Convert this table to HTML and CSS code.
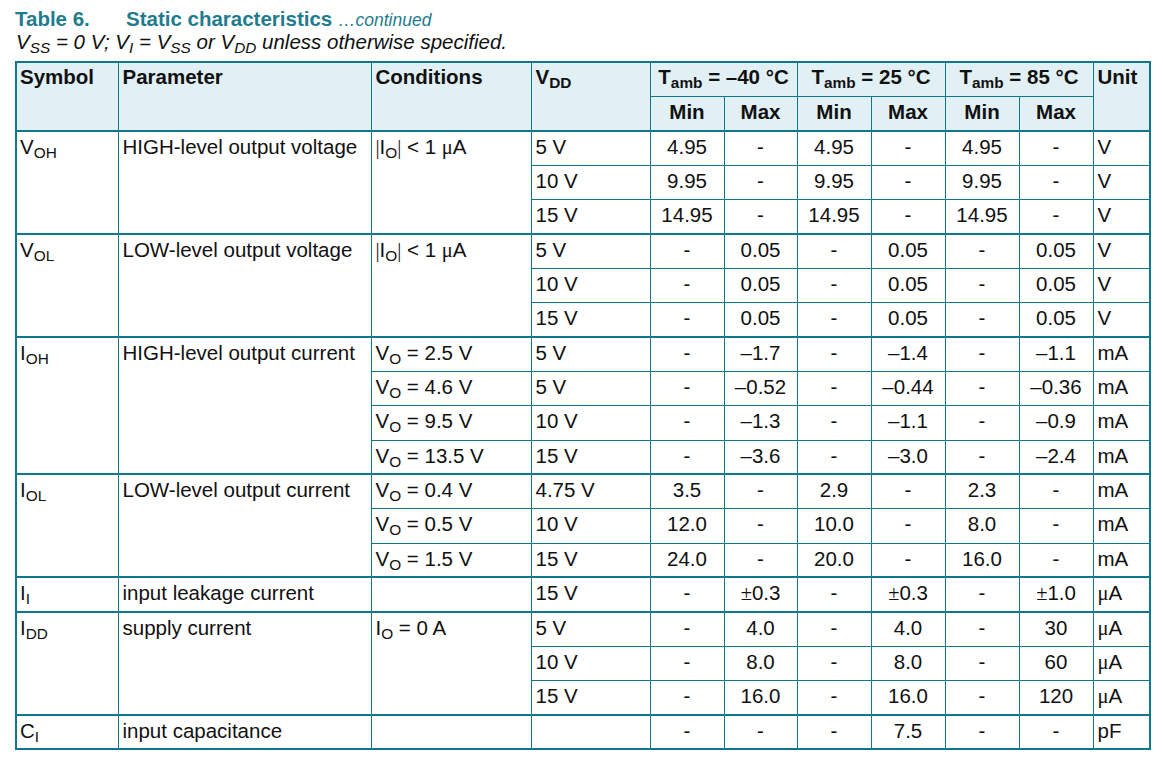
FILE: index.html
```html
<!DOCTYPE html>
<html lang="en">
<head>
<meta charset="utf-8">
<title>Table 6. Static characteristics</title>
<link rel="stylesheet" href="styles.css">
</head>
<body>
<div class="page">
  <div class="caption"><span class="tno">Table 6.</span><span class="ttl">Static characteristics</span> <span class="cont">…continued</span></div>
  <div class="cond">V<span class="sub">SS</span> = 0 V; V<span class="sub">I</span> = V<span class="sub">SS</span> or V<span class="sub">DD</span> unless otherwise specified.</div>
  <table class="spec">
    <colgroup>
      <col class="w-sym"><col class="w-par"><col class="w-con"><col class="w-vdd">
      <col class="w-n"><col class="w-n2"><col class="w-n"><col class="w-n"><col class="w-n"><col class="w-n">
      <col class="w-unit">
    </colgroup>
    <thead>
      <tr>
        <th rowspan="2" class="first">Symbol</th>
        <th rowspan="2">Parameter</th>
        <th rowspan="2">Conditions</th>
        <th rowspan="2">V<span class="sub">DD</span></th>
        <th colspan="2" class="c">T<span class="sub">amb</span> = –40 °C</th>
        <th colspan="2" class="c">T<span class="sub">amb</span> = 25 °C</th>
        <th colspan="2" class="c">T<span class="sub">amb</span> = 85 °C</th>
        <th rowspan="2">Unit</th>
      </tr>
      <tr class="sub-head">
        <th class="c">Min</th><th class="c">Max</th>
        <th class="c">Min</th><th class="c">Max</th>
        <th class="c">Min</th><th class="c">Max</th>
      </tr>
    </thead>
    <tbody>
      <tr class="g">
        <td rowspan="3" class="first">V<span class="sub">OH</span></td>
        <td rowspan="3">HIGH-level output voltage</td>
        <td rowspan="3"><span class="bar">|</span>I<span class="sub">O</span><span class="bar">|</span> &lt; 1 <span class="sym">μ</span>A</td>
        <td>5 V</td><td class="c">4.95</td><td class="c">-</td><td class="c">4.95</td><td class="c">-</td><td class="c">4.95</td><td class="c">-</td><td>V</td>
      </tr>
      <tr><td>10 V</td><td class="c">9.95</td><td class="c">-</td><td class="c">9.95</td><td class="c">-</td><td class="c">9.95</td><td class="c">-</td><td>V</td></tr>
      <tr><td>15 V</td><td class="c">14.95</td><td class="c">-</td><td class="c">14.95</td><td class="c">-</td><td class="c">14.95</td><td class="c">-</td><td>V</td></tr>

      <tr class="g">
        <td rowspan="3" class="first">V<span class="sub">OL</span></td>
        <td rowspan="3">LOW-level output voltage</td>
        <td rowspan="3"><span class="bar">|</span>I<span class="sub">O</span><span class="bar">|</span> &lt; 1 <span class="sym">μ</span>A</td>
        <td>5 V</td><td class="c">-</td><td class="c">0.05</td><td class="c">-</td><td class="c">0.05</td><td class="c">-</td><td class="c">0.05</td><td>V</td>
      </tr>
      <tr><td>10 V</td><td class="c">-</td><td class="c">0.05</td><td class="c">-</td><td class="c">0.05</td><td class="c">-</td><td class="c">0.05</td><td>V</td></tr>
      <tr><td>15 V</td><td class="c">-</td><td class="c">0.05</td><td class="c">-</td><td class="c">0.05</td><td class="c">-</td><td class="c">0.05</td><td>V</td></tr>

      <tr class="g">
        <td rowspan="4" class="first">I<span class="sub">OH</span></td>
        <td rowspan="4">HIGH-level output current</td>
        <td>V<span class="sub">O</span> = 2.5 V</td>
        <td>5 V</td><td class="c">-</td><td class="c">–1.7</td><td class="c">-</td><td class="c">–1.4</td><td class="c">-</td><td class="c">–1.1</td><td>mA</td>
      </tr>
      <tr><td>V<span class="sub">O</span> = 4.6 V</td><td>5 V</td><td class="c">-</td><td class="c">–0.52</td><td class="c">-</td><td class="c">–0.44</td><td class="c">-</td><td class="c">–0.36</td><td>mA</td></tr>
      <tr><td>V<span class="sub">O</span> = 9.5 V</td><td>10 V</td><td class="c">-</td><td class="c">–1.3</td><td class="c">-</td><td class="c">–1.1</td><td class="c">-</td><td class="c">–0.9</td><td>mA</td></tr>
      <tr><td>V<span class="sub">O</span> = 13.5 V</td><td>15 V</td><td class="c">-</td><td class="c">–3.6</td><td class="c">-</td><td class="c">–3.0</td><td class="c">-</td><td class="c">–2.4</td><td>mA</td></tr>

      <tr class="g">
        <td rowspan="3" class="first">I<span class="sub">OL</span></td>
        <td rowspan="3">LOW-level output current</td>
        <td>V<span class="sub">O</span> = 0.4 V</td>
        <td>4.75 V</td><td class="c">3.5</td><td class="c">-</td><td class="c">2.9</td><td class="c">-</td><td class="c">2.3</td><td class="c">-</td><td>mA</td>
      </tr>
      <tr><td>V<span class="sub">O</span> = 0.5 V</td><td>10 V</td><td class="c">12.0</td><td class="c">-</td><td class="c">10.0</td><td class="c">-</td><td class="c">8.0</td><td class="c">-</td><td>mA</td></tr>
      <tr><td>V<span class="sub">O</span> = 1.5 V</td><td>15 V</td><td class="c">24.0</td><td class="c">-</td><td class="c">20.0</td><td class="c">-</td><td class="c">16.0</td><td class="c">-</td><td>mA</td></tr>

      <tr class="g">
        <td class="first">I<span class="sub">I</span></td>
        <td>input leakage current</td>
        <td></td>
        <td>15 V</td><td class="c">-</td><td class="c"><span class="sym">±</span>0.3</td><td class="c">-</td><td class="c"><span class="sym">±</span>0.3</td><td class="c">-</td><td class="c"><span class="sym">±</span>1.0</td><td><span class="sym">μ</span>A</td>
      </tr>

      <tr class="g">
        <td rowspan="3" class="first">I<span class="sub">DD</span></td>
        <td rowspan="3">supply current</td>
        <td rowspan="3">I<span class="sub">O</span> = 0 A</td>
        <td>5 V</td><td class="c">-</td><td class="c">4.0</td><td class="c">-</td><td class="c">4.0</td><td class="c">-</td><td class="c">30</td><td><span class="sym">μ</span>A</td>
      </tr>
      <tr><td>10 V</td><td class="c">-</td><td class="c">8.0</td><td class="c">-</td><td class="c">8.0</td><td class="c">-</td><td class="c">60</td><td><span class="sym">μ</span>A</td></tr>
      <tr><td>15 V</td><td class="c">-</td><td class="c">16.0</td><td class="c">-</td><td class="c">16.0</td><td class="c">-</td><td class="c">120</td><td><span class="sym">μ</span>A</td></tr>

      <tr class="g">
        <td class="first">C<span class="sub">I</span></td>
        <td>input capacitance</td>
        <td></td>
        <td></td><td class="c">-</td><td class="c">-</td><td class="c">-</td><td class="c">7.5</td><td class="c">-</td><td class="c">-</td><td>pF</td>
      </tr>
    </tbody>
  </table>
</div>
</body>
</html>
```

FILE: styles.css
```css
html, body {
  margin: 0;
  padding: 0;
  background: #ffffff;
}

body {
  font-family: "Liberation Sans", Arial, sans-serif;
  color: #111111;
}

.page {
  padding: 7px 0 0 15px;
}

.caption {
  font-size: 20.5px;
  font-weight: bold;
  color: #1f7c8e;
  line-height: 23px;
  height: 23px;
  white-space: nowrap;
}

.caption .tno {
  display: inline-block;
  width: 111px;
}

.caption .cont {
  font-weight: normal;
  font-style: italic;
  font-size: 17.5px;
}

.cond {
  font-style: italic;
  font-size: 20.5px;
  line-height: 23px;
  height: 23px;
  margin-left: 1px;
  white-space: nowrap;
}

.sub {
  font-size: 0.75em;
  vertical-align: -0.25em;
  line-height: 0;
}

.sym {
  font-family: "Liberation Serif", "DejaVu Serif", serif;
}

.bar {
  font-family: "Liberation Serif", serif;
  font-weight: normal;
}

.spec {
  margin-top: 8px;
  border-collapse: collapse;
  table-layout: fixed;
  width: 1134px;
  font-size: 20.5px;
  border: 2px solid #0e788a;
}

.w-sym { width: 102px; }
.w-par { width: 253px; }
.w-con { width: 160px; }
.w-vdd { width: 119px; }
.w-n { width: 74px; }
.w-n2 { width: 73px; }
.w-unit { width: 57px; }

.spec td,
.spec th {
  border: 1px solid #0e788a;
  padding: 3px 0 0 4px;
  vertical-align: top;
  text-align: left;
  line-height: 23px;
  white-space: nowrap;
  overflow: hidden;
}

.spec .first {
  padding-left: 3px;
}

.spec thead th {
  background: #e1f0f5;
  font-weight: bold;
  color: #111111;
  padding-top: 2px;
}

.spec thead tr {
  height: 34.5px;
}

.spec thead tr.sub-head th {
  padding-top: 3px;
  border-bottom: 2px solid #0e788a;
}

.spec tbody tr {
  height: 34.35px;
}

.spec tbody tr.g td {
  border-top: 2px solid #0e788a;
}

.spec .c {
  text-align: center;
  padding-left: 0;
}
```
